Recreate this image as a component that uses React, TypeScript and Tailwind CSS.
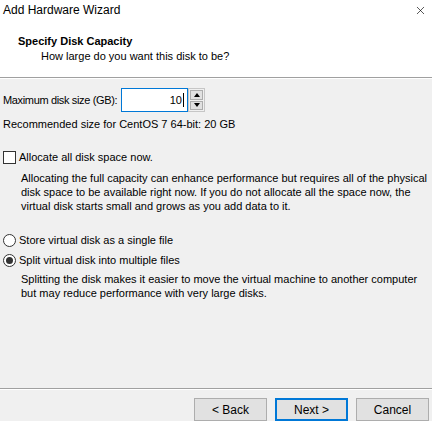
import { X } from "lucide-react";

const font = { fontFamily: "'Liberation Sans', Arial, sans-serif" };

function WinButton({ label, primary }: { label: string; primary?: boolean }) {
  return (
    <button
      className={
        "w-[73px] h-[23px] bg-[#e1e1e1] text-[12px] text-black flex items-center justify-center " +
        (primary ? "border-2 border-[#0078d7]" : "border border-[#adadad]")
      }
    >
      {label}
    </button>
  );
}

export default function App() {
  return (
    <div
      style={font}
      className="w-[432px] h-[421px] bg-[#f0f0f0] flex flex-col overflow-hidden text-[11px] text-black"
    >
      {/* Header */}
      <div className="bg-white h-[77px] shrink-0 relative">
        <div className="flex items-center justify-between h-[21px] pl-[3px] pr-[5px]">
          <span className="text-[12px] leading-[21px]">Add Hardware Wizard</span>
          <X className="w-[13px] h-[13px] text-black" strokeWidth={1.2} />
        </div>
        <div className="pl-[18px] mt-[13px] font-bold leading-[14px]">Specify Disk Capacity</div>
        <div className="pl-[41px] mt-[1px] leading-[14px]">How large do you want this disk to be?</div>
      </div>
      <div className="border-t border-[#a0a0a0] border-b border-b-white" />

      {/* Body */}
      <div className="flex-1 px-[3px]">
        <div className="flex items-center mt-[9px] h-[24px]">
          <span className="w-[118px] shrink-0 whitespace-nowrap leading-[14px] tracking-[-0.35px]">
            Maximum disk size (GB):
          </span>
          <div className="w-[67px] h-[24px] bg-white border border-[#0078d7] flex items-center justify-end pr-[3px]">
            <span>10</span>
            <span className="w-px h-[14px] bg-black ml-[1px]" />
          </div>
          <div className="w-[17px] h-[24px] border border-[#c6c6c6] bg-[#f0f0f0] flex flex-col gap-px p-px">
            <div className="flex-1 bg-[#e1e1e1] border border-[#adadad] flex items-center justify-center">
              <div className="w-0 h-0 border-l-[3px] border-r-[3px] border-b-[4px] border-l-transparent border-r-transparent border-b-black" />
            </div>
            <div className="flex-1 bg-[#e1e1e1] border border-[#adadad] flex items-center justify-center">
              <div className="w-0 h-0 border-l-[3px] border-r-[3px] border-t-[4px] border-l-transparent border-r-transparent border-t-black" />
            </div>
          </div>
        </div>
        <div className="mt-[5px] leading-[14px]">Recommended size for CentOS 7 64-bit: 20 GB</div>

        <div className="mt-[19px] flex items-center h-[14px]">
          <div className="w-[13px] h-[13px] bg-white border border-[#333333] shrink-0" />
          <span className="ml-[3px]">Allocate all disk space now.</span>
        </div>
        <div className="mt-[7px] pl-[18px] leading-[14px] whitespace-nowrap">
          Allocating the full capacity can enhance performance but requires all of the physical
          <br />
          disk space to be available right now. If you do not allocate all the space now, the
          <br />
          virtual disk starts small and grows as you add data to it.
        </div>

        <div className="mt-[20px] flex items-center h-[14px]">
          <div className="w-[13px] h-[13px] rounded-full bg-white border border-[#333333] shrink-0" />
          <span className="ml-[3px]">Store virtual disk as a single file</span>
        </div>
        <div className="mt-[6px] flex items-center h-[14px]">
          <div className="w-[13px] h-[13px] rounded-full bg-white border border-[#333333] shrink-0 flex items-center justify-center">
            <div className="w-[7px] h-[7px] rounded-full bg-[#333333]" />
          </div>
          <span className="ml-[3px]">Split virtual disk into multiple files</span>
        </div>
        <div className="mt-[5px] pl-[18px] leading-[14px] whitespace-nowrap">
          Splitting the disk makes it easier to move the virtual machine to another computer
          <br />
          but may reduce performance with very large disks.
        </div>
      </div>

      {/* Footer */}
      <div className="border-t border-[#a0a0a0] border-b border-b-white" />
      <div className="h-[31px] flex items-end justify-end gap-[8px] pr-[3px] shrink-0">
        <WinButton label="< Back" />
        <WinButton label="Next >" primary />
        <WinButton label="Cancel" />
      </div>
    </div>
  );
}
